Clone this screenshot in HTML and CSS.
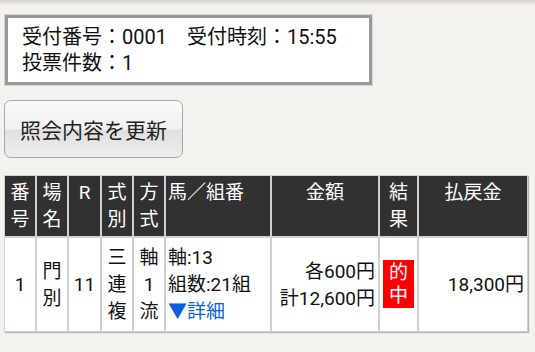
FILE: index.html
```html
<!DOCTYPE html>
<html lang="ja">
<head>
    <meta charset="UTF-8">
    <meta name="viewport" content="width=device-width, initial-scale=1.0">
    <title>照会結果</title>
    <link rel="stylesheet" href="styles.css">
</head>
<body>
    <!-- 受付情報 -->
    <div class="receipt">
        <div>受付番号：0001　受付時刻：15:55</div>
        <div>投票件数：1</div>
    </div>

    <button class="refresh">照会内容を更新</button>

    <!-- 投票内容 -->
    <table class="votes">
        <colgroup>
            <col style="width:32px">
            <col style="width:32px">
            <col style="width:33px">
            <col style="width:32px">
            <col style="width:32px">
            <col style="width:106px">
            <col style="width:108px">
            <col style="width:39px">
            <col style="width:110px">
        </colgroup>
        <thead>
            <tr>
                <th>番<br>号</th>
                <th>場<br>名</th>
                <th>R</th>
                <th>式<br>別</th>
                <th>方<br>式</th>
                <th class="left">馬／組番</th>
                <th>金額</th>
                <th>結<br>果</th>
                <th>払戻金</th>
            </tr>
        </thead>
        <tbody>
            <tr>
                <td>1</td>
                <td>門<br>別</td>
                <td>11</td>
                <td>三<br>連<br>複</td>
                <td>軸<br>1<br>流</td>
                <td class="left">軸:13<br>組数:21組<br><a href="#" class="detail">▼詳細</a></td>
                <td class="right">各600円<br>計12,600円</td>
                <td><span class="hit">的<br>中</span></td>
                <td class="right">18,300円</td>
            </tr>
        </tbody>
    </table>
</body>
</html>
```

FILE: styles.css
```css
body {
    margin: 0;
    padding: 0 4px;
    font-family: Roboto, "Noto Sans CJK JP", sans-serif;
    color: #111;
    background: linear-gradient(#d9d2cb, #f3f2ef 6px) #f3f2ef;
    background-repeat: no-repeat;
    min-height: 352px;
}
.receipt {
    width: 367px;
    box-sizing: border-box;
    margin: 15px 0 0 1px;
    padding: 6px 0 6px 14px;
    background-color: #fff;
    border: 3px solid #999;
    box-shadow: 0 0 0 1px #d4d4d4;
    font-size: 20px;
    line-height: 26px;
}
.refresh {
    display: block;
    margin-top: 15px;
    width: 179px;
    height: 58px;
    padding: 0;
    font-family: Roboto, "Noto Sans CJK JP", sans-serif;
    font-size: 21px;
    color: #222;
    border: 1px solid #a8a8a8;
    border-radius: 7px;
    background: linear-gradient(#fafafa, #f0f0f0 50%, #e0e0e0 52%, #ededed);
    cursor: pointer;
}
.votes {
    margin-top: 17px;
    width: 524px;
    table-layout: fixed;
    border-collapse: separate;
    border-spacing: 0;
    font-size: 19px;
    line-height: 27px;
    box-shadow: 1px 1px 1px rgba(0, 0, 0, 0.25);
}
.votes th,
.votes td {
    border: 1px solid #d0d0d0;
    text-align: center;
    padding: 3px 2px;
}
.votes th {
    background-color: #313131;
    color: #fff;
    font-weight: normal;
    vertical-align: top;
}
.votes td {
    background-color: #fff;
    padding: 6px 2px;
    vertical-align: middle;
}
.votes .left {
    text-align: left;
}
.votes .right {
    text-align: right;
    padding-right: 3px;
}
.detail {
    color: #0b62d6;
    text-decoration: none;
}
.hit {
    display: inline-block;
    padding: 1px 6px;
    line-height: 23px;
    background-color: #f00;
    color: #fff;
}
```
